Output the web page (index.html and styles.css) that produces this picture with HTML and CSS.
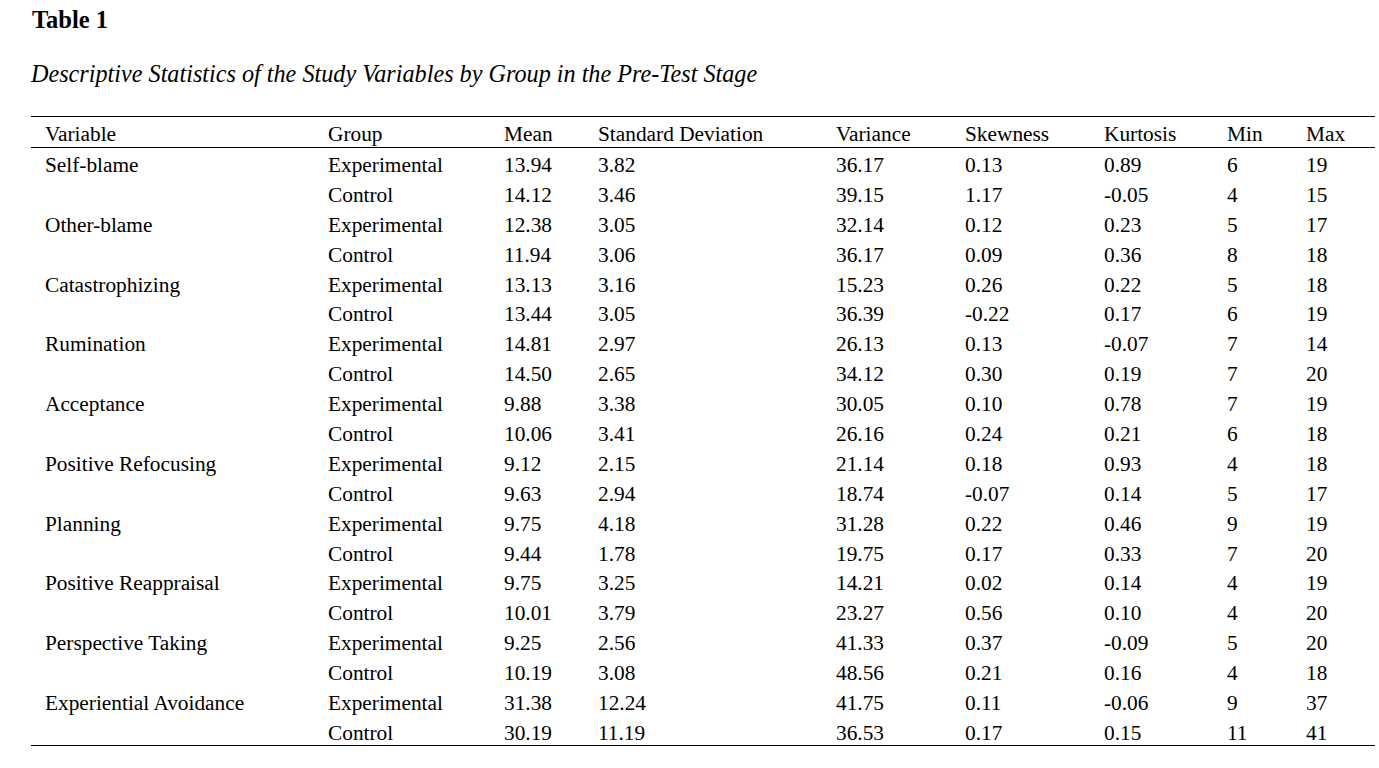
FILE: index.html
```html
<!DOCTYPE html>
<html lang="en">
<head>
<meta charset="utf-8">
<title>Table 1</title>
<link rel="stylesheet" href="styles.css">
</head>
<body>
<div class="page">
  <h1 class="title">Table 1</h1>
  <p class="caption">Descriptive Statistics of the Study Variables by Group in the Pre-Test Stage</p>
  <table class="stats">
    <colgroup>
      <col class="c-var"><col class="c-grp"><col class="c-mean"><col class="c-sd"><col class="c-varc"><col class="c-skew"><col class="c-kurt"><col class="c-min"><col class="c-max">
    </colgroup>
    <thead>
      <tr><th>Variable</th><th>Group</th><th>Mean</th><th>Standard Deviation</th><th>Variance</th><th>Skewness</th><th>Kurtosis</th><th>Min</th><th>Max</th></tr>
    </thead>
    <tbody>
      <tr><td>Self-blame</td><td>Experimental</td><td>13.94</td><td>3.82</td><td>36.17</td><td>0.13</td><td>0.89</td><td>6</td><td>19</td></tr>
      <tr><td></td><td>Control</td><td>14.12</td><td>3.46</td><td>39.15</td><td>1.17</td><td>-0.05</td><td>4</td><td>15</td></tr>
      <tr><td>Other-blame</td><td>Experimental</td><td>12.38</td><td>3.05</td><td>32.14</td><td>0.12</td><td>0.23</td><td>5</td><td>17</td></tr>
      <tr><td></td><td>Control</td><td>11.94</td><td>3.06</td><td>36.17</td><td>0.09</td><td>0.36</td><td>8</td><td>18</td></tr>
      <tr><td>Catastrophizing</td><td>Experimental</td><td>13.13</td><td>3.16</td><td>15.23</td><td>0.26</td><td>0.22</td><td>5</td><td>18</td></tr>
      <tr><td></td><td>Control</td><td>13.44</td><td>3.05</td><td>36.39</td><td>-0.22</td><td>0.17</td><td>6</td><td>19</td></tr>
      <tr><td>Rumination</td><td>Experimental</td><td>14.81</td><td>2.97</td><td>26.13</td><td>0.13</td><td>-0.07</td><td>7</td><td>14</td></tr>
      <tr><td></td><td>Control</td><td>14.50</td><td>2.65</td><td>34.12</td><td>0.30</td><td>0.19</td><td>7</td><td>20</td></tr>
      <tr><td>Acceptance</td><td>Experimental</td><td>9.88</td><td>3.38</td><td>30.05</td><td>0.10</td><td>0.78</td><td>7</td><td>19</td></tr>
      <tr><td></td><td>Control</td><td>10.06</td><td>3.41</td><td>26.16</td><td>0.24</td><td>0.21</td><td>6</td><td>18</td></tr>
      <tr><td>Positive Refocusing</td><td>Experimental</td><td>9.12</td><td>2.15</td><td>21.14</td><td>0.18</td><td>0.93</td><td>4</td><td>18</td></tr>
      <tr><td></td><td>Control</td><td>9.63</td><td>2.94</td><td>18.74</td><td>-0.07</td><td>0.14</td><td>5</td><td>17</td></tr>
      <tr><td>Planning</td><td>Experimental</td><td>9.75</td><td>4.18</td><td>31.28</td><td>0.22</td><td>0.46</td><td>9</td><td>19</td></tr>
      <tr><td></td><td>Control</td><td>9.44</td><td>1.78</td><td>19.75</td><td>0.17</td><td>0.33</td><td>7</td><td>20</td></tr>
      <tr><td>Positive Reappraisal</td><td>Experimental</td><td>9.75</td><td>3.25</td><td>14.21</td><td>0.02</td><td>0.14</td><td>4</td><td>19</td></tr>
      <tr><td></td><td>Control</td><td>10.01</td><td>3.79</td><td>23.27</td><td>0.56</td><td>0.10</td><td>4</td><td>20</td></tr>
      <tr><td>Perspective Taking</td><td>Experimental</td><td>9.25</td><td>2.56</td><td>41.33</td><td>0.37</td><td>-0.09</td><td>5</td><td>20</td></tr>
      <tr><td></td><td>Control</td><td>10.19</td><td>3.08</td><td>48.56</td><td>0.21</td><td>0.16</td><td>4</td><td>18</td></tr>
      <tr><td>Experiential Avoidance</td><td>Experimental</td><td>31.38</td><td>12.24</td><td>41.75</td><td>0.11</td><td>-0.06</td><td>9</td><td>37</td></tr>
      <tr><td></td><td>Control</td><td>30.19</td><td>11.19</td><td>36.53</td><td>0.17</td><td>0.15</td><td>11</td><td>41</td></tr>
    </tbody>
  </table>
</div>
</body>
</html>
```

FILE: styles.css
```css
html, body {
  margin: 0;
  padding: 0;
  background: #ffffff;
}

body {
  font-family: "Liberation Serif", "Times New Roman", serif;
  color: #000000;
}

.page {
  padding: 6px 4px 0 31px;
}

.title {
  margin: 0 0 0 1px;
  font-size: 24.5px;
  font-weight: bold;
  line-height: 28px;
}

.caption {
  margin: 26px 0 0 0;
  font-size: 24.2px;
  font-style: italic;
  line-height: 28px;
}

.stats {
  margin-top: 28px;
  width: 1344px;
  border-collapse: collapse;
  table-layout: fixed;
  font-size: 21.33px;
  border-top: 1px solid #000;
  border-bottom: 1px solid #000;
}

.c-var { width: 283px; }
.c-grp { width: 176px; }
.c-mean { width: 94px; }
.c-sd { width: 238px; }
.c-varc { width: 129px; }
.c-skew { width: 139px; }
.c-kurt { width: 123px; }
.c-min { width: 79px; }
.c-max { width: 83px; }

.stats th,
.stats td {
  text-align: left;
  font-weight: normal;
  padding: 0 0 0 14px;
  white-space: nowrap;
  vertical-align: middle;
  line-height: 24px;
}

.stats thead tr {
  height: 31px;
}

.stats thead th {
  border-bottom: 1px solid #000;
  padding-top: 4px;
}

.stats tbody tr {
  height: 29.9px;
}

.stats tbody td {
  padding-top: 5px;
}
```
